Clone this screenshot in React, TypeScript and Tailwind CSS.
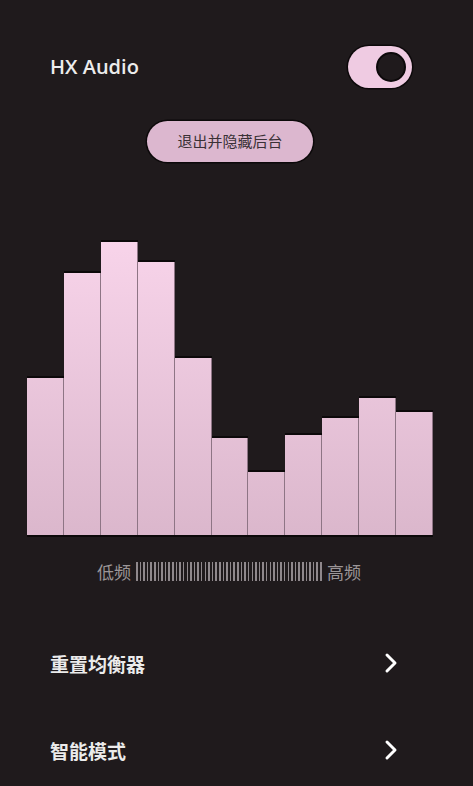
// ── Equalizer band heights (px, measured from chart bottom) ──
const BANDS = [159, 264, 295, 275, 179, 99, 65, 102, 119, 139, 125]
const CHART_H = 295
const TICKS = 52

const ROWS = ['重置均衡器', '智能模式']

function Toggle() {
  return (
    <div className="flex h-[42px] w-[64px] items-center justify-end rounded-full bg-[#efcbe2] pr-[6px] shadow-[0_0_0_1.5px_#0c090a]">
      <div className="h-[30px] w-[30px] rounded-full border-[2.5px] border-[#0c090a] bg-[#1f1a1c]" />
    </div>
  )
}

function Chevron() {
  return (
    <svg width="14" height="22" viewBox="0 0 14 22" fill="none" className="text-white">
      <path d="M3 3 L11 11 L3 19" stroke="currentColor" strokeWidth="3" strokeLinecap="round" strokeLinejoin="round" />
    </svg>
  )
}

function Chart() {
  return (
    <div
      className="ml-[27px] flex w-[406px] items-end border-b-2 border-[#0c090a]"
      style={{ height: CHART_H + 2 }}
    >
      {BANDS.map((h, i) => (
        <div
          key={i}
          className="flex-1 border-t-2 border-[#0c090a] bg-gradient-to-b from-[#f8d4ea] to-[#dbb7cc] bg-[length:100%_295px] bg-bottom shadow-[inset_-1px_0_0_#8e7585]"
          style={{ height: h }}
        />
      ))}
    </div>
  )
}

function FreqScale() {
  return (
    <div className="mt-[25px] flex items-center pl-[97px] text-[17px] leading-none text-[#9b9597] [font-family:'Noto_Sans_CJK_SC',sans-serif]">
      <span>低频</span>
      <div className="ml-[5px] flex h-[19px] w-[186px] items-stretch justify-between">
        {Array.from({ length: TICKS }).map((_, i) => (
          <div key={i} className="w-[1.5px] bg-[#8f888c]" />
        ))}
      </div>
      <span className="ml-[5px]">高频</span>
    </div>
  )
}

export default function App() {
  return (
    <div className="min-h-screen w-full overflow-hidden bg-[#1f1a1c] pt-[46px] [font-family:'Open_Sans','Noto_Sans_CJK_SC',sans-serif]">
      {/* ── Header ── */}
      <div className="flex items-center justify-between pl-[50px] pr-[61px]">
        <span className="text-[20px] font-semibold leading-none text-[#ececec]">HX Audio</span>
        <Toggle />
      </div>

      {/* ── Exit button ── */}
      <div className="mt-[33px] pl-[147px]">
        <button className="flex h-[41px] w-[166px] items-center justify-center rounded-full bg-[#dcb7cf] text-[15px] text-[#3a3136] shadow-[0_0_0_1.5px_#0c090a] [font-family:'Noto_Sans_CJK_SC',sans-serif]">
          退出并隐藏后台
        </button>
      </div>

      {/* ── Equalizer ── */}
      <div className="mt-[78px]">
        <Chart />
      </div>

      <FreqScale />

      {/* ── Menu rows ── */}
      <div className="mt-[70px] flex flex-col gap-[63px]">
        {ROWS.map((label) => (
          <div key={label} className="flex h-[24px] items-center justify-between pl-[50px] pr-[75px]">
            <span className="text-[19px] font-bold leading-none text-[#ebebeb] [font-family:'Noto_Sans_CJK_SC',sans-serif]">
              {label}
            </span>
            <Chevron />
          </div>
        ))}
      </div>
    </div>
  )
}
